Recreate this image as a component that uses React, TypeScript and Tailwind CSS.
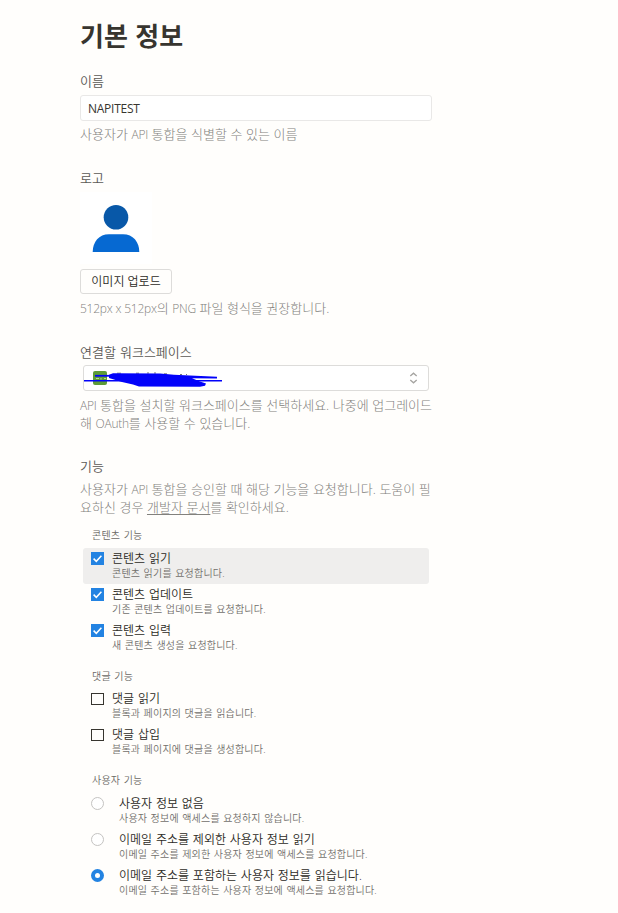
import type { ReactNode } from "react";

type Option = {
  title: string;
  description: string;
  checked?: boolean;
  highlighted?: boolean;
};

const contentOptions: Option[] = [
  { title: "콘텐츠 읽기", description: "콘텐츠 읽기를 요청합니다.", checked: true, highlighted: true },
  { title: "콘텐츠 업데이트", description: "기존 콘텐츠 업데이트를 요청합니다.", checked: true },
  { title: "콘텐츠 입력", description: "새 콘텐츠 생성을 요청합니다.", checked: true },
];

const commentOptions: Option[] = [
  { title: "댓글 읽기", description: "블록과 페이지의 댓글을 읽습니다." },
  { title: "댓글 삽입", description: "블록과 페이지에 댓글을 생성합니다." },
];

const userOptions: Option[] = [
  { title: "사용자 정보 없음", description: "사용자 정보에 액세스를 요청하지 않습니다." },
  {
    title: "이메일 주소를 제외한 사용자 정보 읽기",
    description: "이메일 주소를 제외한 사용자 정보에 액세스를 요청합니다.",
  },
  {
    title: "이메일 주소를 포함하는 사용자 정보를 읽습니다.",
    description: "이메일 주소를 포함하는 사용자 정보에 액세스를 요청합니다.",
    checked: true,
  },
];

function Label({ children }: { children: ReactNode }) {
  return (
    <div className="h-[18px] text-[13px] font-[350] leading-[18px] text-[#5b5955]">{children}</div>
  );
}

function Hint({ children }: { children: ReactNode }) {
  return (
    <p className="whitespace-nowrap text-[13px] font-light leading-[18px] text-[#82817d] [word-spacing:0.2px]">
      {children}
    </p>
  );
}

function Latin({ children }: { children: ReactNode }) {
  return <span className="text-[12px] leading-none tracking-[-0.25px]">{children}</span>;
}

function Checkbox({ checked }: { checked?: boolean }) {
  if (!checked) {
    return <span className="mt-[5px] h-3 w-[13px] shrink-0 border-[1.5px] border-[#37352f]" />;
  }
  return (
    <span className="mt-1 flex size-[13px] shrink-0 items-center justify-center bg-[#2383e2]">
      <svg width="13" height="13" viewBox="0 0 13 13" fill="none">
        <path d="M2.6 6.6L5.3 9.3L10.4 3.7" stroke="white" strokeWidth="1.5" />
      </svg>
    </span>
  );
}

function Radio({ checked }: { checked?: boolean }) {
  if (!checked) {
    return <span className="mt-1 size-[13px] shrink-0 rounded-full border border-[#c4c3c1] bg-white" />;
  }
  return (
    <span className="mt-1 flex size-[13px] shrink-0 items-center justify-center rounded-full bg-[#2383e2]">
      <span className="size-[5px] rounded-full bg-white" />
    </span>
  );
}

function OptionRow({ option, radio }: { option: Option; radio?: boolean }) {
  return (
    <div
      className={`flex h-9 rounded-[3px] pl-2 ${option.highlighted ? "bg-[#efeeed]" : ""} ${
        radio ? "gap-[15px]" : "gap-2"
      }`}
    >
      {radio ? <Radio checked={option.checked} /> : <Checkbox checked={option.checked} />}
      <div className="whitespace-nowrap pt-[3px]">
        <div className="h-4 text-[12px] font-[350] leading-4 text-[#2c2a25]">{option.title}</div>
        <div className="h-3 text-[10px] font-[350] leading-3 tracking-[0.18px] text-[#716f6b]">
          {option.description}
        </div>
      </div>
    </div>
  );
}

function GroupTitle({ children }: { children: ReactNode }) {
  return (
    <div className="pl-[9px] text-[10px] font-[350] leading-4 tracking-[0.2px] text-[#6b6965]">
      {children}
    </div>
  );
}

export default function App() {
  return (
    <main className="h-[913px] w-full overflow-hidden bg-[#fffefc] pl-20 pt-[18px] font-['Open_Sans','Noto_Sans_CJK_KR',sans-serif] [word-spacing:0.7px]">
      <div className="w-[352px]">
        <h1 className="h-9 text-[26px] font-bold leading-9 text-[#37352f]">기본 정보</h1>

        <section className="mt-[18px]">
          <Label>이름</Label>
          <div className="mt-[5px] flex h-[26px] items-center rounded-[3px] border border-[#e9e8e7] bg-white pl-[7px] pt-px text-[12px] tracking-[-0.25px] text-[#37352f]">
            NAPITEST
          </div>
          <div className="mt-1">
            <Hint>
              사용자가 <Latin>API</Latin> 통합을 식별할 수 있는 이름
            </Hint>
          </div>
        </section>

        <section className="mt-[26px]">
          <Label>로고</Label>
          <div className="mt-[5px] size-[72px] bg-white">
            <svg width="72" height="72" viewBox="0 0 72 72">
              <circle cx="36" cy="25.3" r="12.3" fill="#0858a8" />
              <path d="M12.7 60C12.7 50 19 42.3 29 42.3H43C53 42.3 59.3 50 59.3 60Z" fill="#0669d2" />
            </svg>
          </div>
          <button
            type="button"
            className="mt-[5px] flex h-[25px] w-[92px] items-center justify-center rounded-[3px] border border-[#dddcda] text-[12px] font-[350] text-[#2c2a25]"
          >
            이미지 업로드
          </button>
          <div className="mt-[5px]">
            <Hint>
              <Latin>512px x 512px</Latin>의 <Latin>PNG</Latin> 파일 형식을 권장합니다.
            </Hint>
          </div>
        </section>

        <section className="mt-[26px]">
          <Label>연결할 워크스페이스</Label>
          <div className="relative mx-[3px] mt-1 flex h-[26px] items-center justify-between rounded-[3px] border border-[#dddcda] bg-white pl-[9px] pr-[10px]">
            <span className="size-[14px] rounded-[2px] bg-[#5d9b37]" />
            <svg width="9" height="12" viewBox="0 0 9 12" fill="none" stroke="#a5a4a1" strokeWidth="1.3">
              <path d="M1.3 4L4.5 1.2L7.7 4M1.3 8L4.5 10.8L7.7 8" />
            </svg>
            {/* marker strokes hiding the workspace name */}
            <svg className="absolute left-0 top-0" width="142" height="24" viewBox="84 366 142 24">
              <path
                d="M117 373.2H121M136 373.2H139M147 373H149M154 373H156M164 373.8H167M180 374.5H182M186 374.5H187"
                stroke="#777"
                fill="none"
              />
              <path
                d="M109 374.8L113 373.3L160 373.5L174 374.7L190 375.5L217 376.8L217 378.5L192 378.3L200 381.5L206 383.5L205 385.8L200 386.7L139 386.5L133 384.5L122 382L109 378Z"
                fill="#0202fa"
              />
              <path d="M84 380.7L222 380.7" stroke="#0202fa" strokeWidth="1.6" />
              <path d="M95 375.8H112" stroke="#0202fa" strokeWidth="1.8" fill="none" />
              <path d="M96 378.5H99M101 378V379.5M104 378.5H106" stroke="#b5d09f" />
            </svg>
          </div>
          <div className="mt-[5px]">
            <Hint>
              <Latin>API</Latin> 통합을 설치할 워크스페이스를 선택하세요. 나중에 업그레이드
              <br />해 <Latin>OAuth</Latin>를 사용할 수 있습니다.
            </Hint>
          </div>
        </section>

        <section className="mt-[25px]">
          <Label>기능</Label>
          <div className="mt-[5px]">
            <Hint>
              사용자가 <Latin>API</Latin> 통합을 승인할 때 해당 기능을 요청합니다. 도움이 필
              <br />
              요하신 경우{" "}
              <a className="underline decoration-1 underline-offset-[2px]">개발자 문서</a>를 확인하세요.
            </Hint>
          </div>
          <div className="mx-[3px] mt-[11px]">
            <GroupTitle>콘텐츠 기능</GroupTitle>
            <div className="mt-[5px]">
              {contentOptions.map((option) => (
                <OptionRow key={option.title} option={option} />
              ))}
            </div>
            <div className="mt-3">
              <GroupTitle>댓글 기능</GroupTitle>
            </div>
            <div className="mt-1">
              {commentOptions.map((option) => (
                <OptionRow key={option.title} option={option} />
              ))}
            </div>
            <div className="mt-3">
              <GroupTitle>사용자 기능</GroupTitle>
            </div>
            <div className="mt-[5px]">
              {userOptions.map((option) => (
                <OptionRow key={option.title} option={option} radio />
              ))}
            </div>
          </div>
        </section>
      </div>
    </main>
  );
}
